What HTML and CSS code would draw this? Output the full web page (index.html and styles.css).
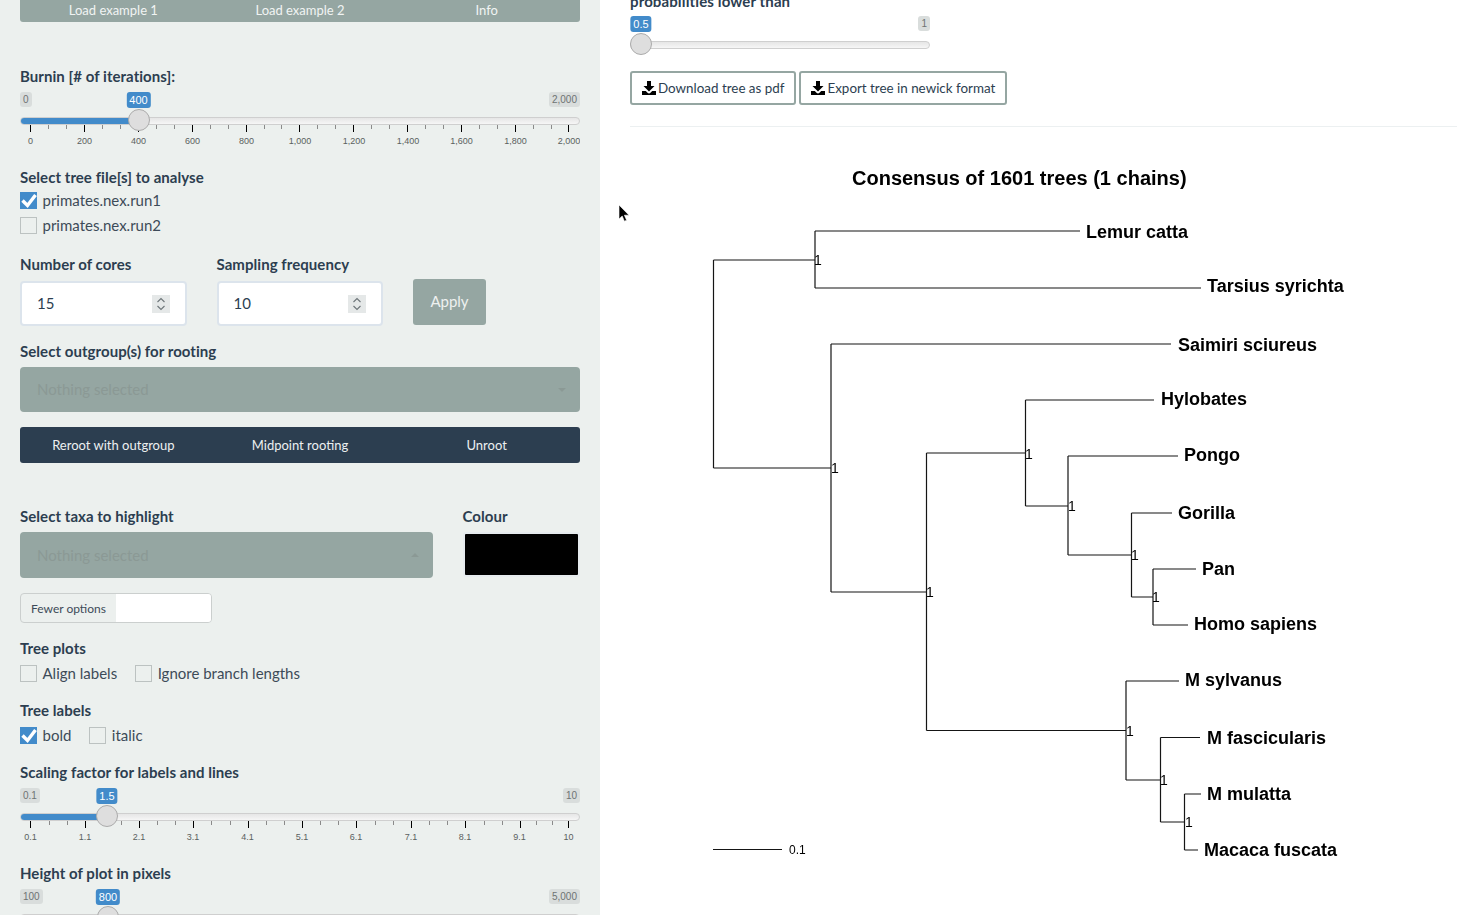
FILE: index.html
```html
<!DOCTYPE html>
<html lang="en">
<head>
  <meta charset="UTF-8">
  <title>Consensus tree</title>
  <link rel="stylesheet" href="styles.css">
</head>
<body>
  <div class="page">
    <div class="sidebar">
      <div class="btn-bar bar-grey">
        <span>Load example 1</span><span>Load example 2</span><span>Info</span>
      </div>

      <label class="field-label burnin-label">Burnin [# of iterations]:</label>
      <div class="slider">
        <div class="slider-ends"><span class="end">0</span><span class="end">2,000</span></div>
        <span class="value" style="left:118.5px">400</span>
        <div class="track"><div class="fill" style="width:119px"></div></div>
        <span class="handle" style="left:119px"></span>
        <svg class="grid" viewBox="20 0 560 22" width="560" height="22">
          <path class="major" d="M30.5 0v7M84.5 0v7M138.5 0v7M192.5 0v7M246.5 0v7M299.5 0v7M353.5 0v7M407.5 0v7M461.5 0v7M515.5 0v7M568.5 0v7"/>
          <path class="minor" d="M48.5 0v4M66.5 0v4M102.5 0v4M120.5 0v4M156.5 0v4M174.5 0v4M210.5 0v4M228.5 0v4M264.5 0v4M281.5 0v4M317.5 0v4M335.5 0v4M371.5 0v4M389.5 0v4M425.5 0v4M443.5 0v4M479.5 0v4M497.5 0v4M533.5 0v4M551.5 0v4"/>
          <text x="30.5" y="19">0</text><text x="84.5" y="19">200</text><text x="138.5" y="19">400</text><text x="192.5" y="19">600</text><text x="246.5" y="19">800</text><text x="300" y="19">1,000</text><text x="354" y="19">1,200</text><text x="408" y="19">1,400</text><text x="461.5" y="19">1,600</text><text x="515.5" y="19">1,800</text><text x="569" y="19">2,000</text>
        </svg>
      </div>

      <label class="field-label files-label">Select tree file[s] to analyse</label>
      <div class="check-row"><span class="check checked"><svg viewBox="0 0 17 17"><path d="M2.5 8.5l5 5L15.5 3" /></svg></span>primates.nex.run1</div>
      <div class="check-row"><span class="check"></span>primates.nex.run2</div>

      <div class="numbers">
        <div class="num-col">
          <label class="field-label">Number of cores</label>
          <div class="num-box">
            <input class="num-input" type="number" value="15">
            <span class="spin"><svg viewBox="0 0 18 18"><path d="M5.5 7L9 3.500 12.500 7M5.500 11L9 14.500 12.500 11"/></svg></span>
          </div>
        </div>
        <div class="num-col">
          <label class="field-label">Sampling frequency</label>
          <div class="num-box">
            <input class="num-input" type="number" value="10">
            <span class="spin"><svg viewBox="0 0 18 18"><path d="M5.5 7L9 3.500 12.500 7M5.500 11L9 14.500 12.500 11"/></svg></span>
          </div>
        </div>
        <button class="apply">Apply</button>
      </div>

      <label class="field-label outgroup-label">Select outgroup(s) for rooting</label>
      <div class="picker"><span>Nothing selected</span><span class="caret"></span></div>

      <div class="btn-bar bar-dark">
        <span>Reroot with outgroup</span><span>Midpoint rooting</span><span>Unroot</span>
      </div>

      <div class="taxa-row">
        <div class="taxa-col">
          <label class="field-label">Select taxa to highlight</label>
          <div class="picker picker-tall"><span>Nothing selected</span><span class="caret caret-up"></span></div>
        </div>
        <div class="colour-col">
          <label class="field-label">Colour</label>
          <div class="colour-box"></div>
        </div>
      </div>

      <div class="toggle"><span class="toggle-label">Fewer options</span><span class="toggle-empty"></span></div>

      <label class="field-label plots-label">Tree plots</label>
      <div class="check-line">
        <div class="check-row"><span class="check"></span>Align labels</div>
        <div class="check-row"><span class="check"></span>Ignore branch lengths</div>
      </div>

      <label class="field-label section-label">Tree labels</label>
      <div class="check-line">
        <div class="check-row"><span class="check checked"><svg viewBox="0 0 17 17"><path d="M2.5 8.5l5 5L15.5 3" /></svg></span>bold</div>
        <div class="check-row"><span class="check"></span>italic</div>
      </div>

      <label class="field-label section-label">Scaling factor for labels and lines</label>
      <div class="slider">
        <div class="slider-ends"><span class="end">0.1</span><span class="end">10</span></div>
        <span class="value" style="left:87px">1.5</span>
        <div class="track"><div class="fill" style="width:87px"></div></div>
        <span class="handle" style="left:87px"></span>
        <svg class="grid" viewBox="20 0 560 22" width="560" height="22">
          <path class="major" d="M30.5 0v7M85.5 0v7M139.5 0v7M193.5 0v7M248.5 0v7M302.5 0v7M356.5 0v7M411.5 0v7M465.5 0v7M520.5 0v7M568.5 0v7"/>
          <path class="minor" d="M49.5 0v4M67.5 0v4M103.5 0v4M121.5 0v4M157.5 0v4M175.5 0v4M211.5 0v4M230.5 0v4M266.5 0v4M284.5 0v4M320.5 0v4M338.5 0v4M375.5 0v4M393.5 0v4M429.5 0v4M447.5 0v4M484.5 0v4M502.5 0v4M536.5 0v4M552.5 0v4"/>
          <text x="30.5" y="19">0.1</text><text x="85" y="19">1.1</text><text x="139" y="19">2.1</text><text x="193" y="19">3.1</text><text x="247.5" y="19">4.1</text><text x="302" y="19">5.1</text><text x="356" y="19">6.1</text><text x="411" y="19">7.1</text><text x="465" y="19">8.1</text><text x="519.5" y="19">9.1</text><text x="568.5" y="19">10</text>
        </svg>
      </div>

      <label class="field-label height-label">Height of plot in pixels</label>
      <div class="slider">
        <div class="slider-ends"><span class="end">100</span><span class="end">5,000</span></div>
        <span class="value" style="left:88px">800</span>
        <div class="track"><div class="fill" style="width:88px"></div></div>
        <span class="handle" style="left:88px"></span>
      </div>
    </div>

    <div class="main">
      <label class="field-label prob-label">probabilities lower than</label>
      <div class="slider slider-short">
        <div class="slider-ends"><span class="end end-hidden">0.5</span><span class="end">1</span></div>
        <span class="value" style="left:11px">0.5</span>
        <div class="track"></div>
        <span class="handle" style="left:11px"></span>
      </div>

      <div class="downloads">
        <button class="dl-btn"><svg class="dl-icon" viewBox="0 0 14 14"><path d="M5 0h4v5h3.500L7 10.500 1.500 5H5zM0 10h3.800l1.700 1.700a2.100 2.100 0 0 0 3 0L10.200 10H14v4H0z"/></svg>Download tree as pdf</button>
        <button class="dl-btn"><svg class="dl-icon" viewBox="0 0 14 14"><path d="M5 0h4v5h3.500L7 10.500 1.500 5H5zM0 10h3.800l1.700 1.700a2.100 2.100 0 0 0 3 0L10.200 10H14v4H0z"/></svg>Export tree in newick format</button>
      </div>

      <hr class="rule">

      <!-- viewBox uses the page coordinates of the plot -->
      <svg class="tree" viewBox="630 127 827 788" width="827" height="788">
        <text class="tree-title" x="852" y="185">Consensus of 1601 trees (1 chains)</text>
        <path class="branches" d="M713.5 260V468M713.5 260H815M815 231V288M815 231H1080M815 288H1201M713.5 468H831M831 344V592M831 344H1171M831 592H926.5M926.5 453V730.5M926.5 453H1025.5M1025.5 400V506M1025.5 400H1154M1025.5 506H1068M1068 456V555M1068 456H1178M1068 555H1131.5M1131.5 513V597M1131.5 513H1172M1131.5 597H1153M1153 569V625M1153 569H1196M1153 625H1188M926.5 730.5H1126M1126 681V780M1126 681H1179M1126 780H1160.5M1160.5 737.5V822M1160.5 737.5H1200M1160.5 822H1184.5M1184.5 794V850M1184.5 794H1201M1184.5 850H1198M713 849.5H782"/>
        <g class="taxa">
          <text x="1086" y="238">Lemur catta</text>
          <text x="1207" y="292">Tarsius syrichta</text>
          <text x="1178" y="351">Saimiri sciureus</text>
          <text x="1161" y="405">Hylobates</text>
          <text x="1184" y="461">Pongo</text>
          <text x="1178" y="519">Gorilla</text>
          <text x="1202" y="575">Pan</text>
          <text x="1194" y="630">Homo sapiens</text>
          <text x="1185" y="686">M sylvanus</text>
          <text x="1207" y="744">M fascicularis</text>
          <text x="1207" y="800">M mulatta</text>
          <text x="1204" y="856">Macaca fuscata</text>
        </g>
        <g class="support">
          <text x="814" y="265">1</text>
          <text x="831" y="473">1</text>
          <text x="926" y="597">1</text>
          <text x="1025" y="459">1</text>
          <text x="1068" y="511">1</text>
          <text x="1131" y="560">1</text>
          <text x="1152" y="602">1</text>
          <text x="1126" y="736">1</text>
          <text x="1160" y="785">1</text>
          <text x="1185" y="827">1</text>
          <text class="scale-text" x="789" y="854">0.1</text>
        </g>
      </svg>
    </div>
  </div>

  <!-- mouse pointer captured in the shot -->
  <svg class="pointer" viewBox="0 0 12 18" width="12" height="18"><path d="M1 0v14l3.200-3 2.200 5.200 2.200-1-2.200-5H11z"/></svg>
</body>
</html>
```

FILE: styles.css
```css
body {
  margin: 0;
  font-family: Lato, "Open Sans", sans-serif;
  font-size: 15px;
  line-height: 21px;
  color: #2c3e50;
  background: #fff;
  overflow: hidden;
}
.page {
  display: flex;
  height: 915px;
  overflow: hidden;
}
.sidebar {
  flex: 0 0 600px;
  box-sizing: border-box;
  height: 915px;
  padding: 0 20px;
  background: #ecf0ee;
  overflow: hidden;
}
.main {
  flex: 1;
  min-width: 0;
  padding-left: 30px;
}

/* labels */
.field-label {
  display: block;
  font-weight: 700;
  letter-spacing: 0.05px;
  margin-bottom: 5px;
}
.burnin-label { margin-top: 44px; }
.files-label { margin-top: 20px; margin-bottom: 0; }
.outgroup-label { margin-top: 15px; }
.plots-label { margin-top: 15px; margin-bottom: 2px; }
.section-label { margin-top: 14px; margin-bottom: 2px; }
.section-label:nth-last-of-type(2) { margin-bottom: 5px; }
.height-label { margin-top: 20px; }
.prob-label { margin-top: -9px; margin-bottom: 4px; letter-spacing: 0.12px; }

/* button bars */
.btn-bar {
  display: flex;
  height: 36px;
  border-radius: 0 0 3px 3px;
  color: #fff;
  font-size: 13px;
}
.btn-bar span {
  flex: 1;
  display: flex;
  align-items: center;
  justify-content: center;
}
.bar-grey {
  height: 24px;
  margin-top: -2px;
  background: #95a6a2;
  color: #f1f4f3;
}
.bar-dark {
  margin-top: 15px;
  background: #2c3e50;
  border-radius: 3px;
  color: #ecf0f1;
}

/* sliders */
.slider {
  position: relative;
  font-family: "Liberation Sans", Arial, sans-serif;
}
.slider-short { width: 300px; }
.slider-ends {
  display: flex;
  justify-content: space-between;
  align-items: flex-start;
  height: 25px;
}
.end {
  padding: 1px 3px;
  font-size: 10px;
  line-height: 13px;
  color: #6e7373;
  background: #d9dddc;
  border-radius: 3px;
}
.end-hidden { visibility: hidden; }
.value {
  position: absolute;
  top: 0;
  padding: 1px 3px;
  transform: translateX(-50%);
  font-size: 11px;
  line-height: 14px;
  color: #fff;
  background: #428bca;
  border-radius: 3px;
}
.track {
  box-sizing: border-box;
  height: 8px;
  border: 1px solid #cfcfcf;
  border-radius: 4px;
  background: linear-gradient(#e6e6e6, #f6f6f6);
  overflow: hidden;
}
.fill {
  height: 8px;
  margin: -1px;
  background: #428bca;
}
.handle {
  position: absolute;
  top: 17px;
  box-sizing: border-box;
  width: 22px;
  height: 22px;
  margin-left: -11px;
  border: 1px solid #ababab;
  border-radius: 50%;
  background: #dedede;
}
.grid {
  display: block;
}
.major {
  stroke: #000;
  stroke-width: 1;
}
.minor {
  stroke: #8a8a8a;
  stroke-width: 1;
}
.grid text {
  font-size: 9px;
  fill: #5a5f60;
  text-anchor: middle;
}

/* checkboxes */
.check-row {
  display: flex;
  align-items: center;
  height: 25px;
  color: #3d4b58;
}
.check {
  box-sizing: border-box;
  width: 17px;
  height: 17px;
  margin-right: 5.5px;
  border: 1px solid #bcc2c1;
  background: #ecf0ee;
}
.check.checked {
  border: 0;
  background: #428bca;
}
.check svg {
  display: block;
}
.check path {
  fill: none;
  stroke: #fff;
  stroke-width: 3.4;
}
.check-line {
  display: flex;
  gap: 18px;
}

/* number inputs */
.numbers {
  display: flex;
  align-items: flex-start;
  margin-top: 16px;
}
.num-col {
  width: 166.5px;
  margin-right: 30px;
}
.num-col .field-label { margin-bottom: 6px; }
.num-box {
  display: flex;
  align-items: center;
  box-sizing: border-box;
  height: 45px;
  padding: 0 15px;
  border: 2px solid #dce4ec;
  border-radius: 4px;
  background: #fff;
}
.num-input {
  flex: 1;
  min-width: 0;
  padding: 0 0 2px;
  border: 0;
  outline: 0;
  font: 15px Lato, sans-serif;
  color: #2c3e50;
  background: transparent;
  -moz-appearance: textfield;
}
.num-input::-webkit-inner-spin-button {
  display: none;
}
.spin {
  width: 18px;
  height: 18px;
  background: #e5e8e8;
}
.spin svg {
  display: block;
}
.spin path {
  fill: none;
  stroke: #6d7579;
  stroke-width: 1.1;
}
.apply {
  width: 73px;
  height: 46px;
  margin-top: 25px;
  padding: 0 0 2px;
  border: 0;
  border-radius: 3px;
  font: 15px Lato, sans-serif;
  color: #eef1f0;
  background: #95a6a2;
}

/* select pickers */
.picker {
  display: flex;
  align-items: center;
  justify-content: space-between;
  box-sizing: border-box;
  height: 45px;
  padding: 0 14px 0 17px;
  border-radius: 4px;
  background: #95a6a2;
  color: #8b9995;
}
.picker-tall { height: 46px; }
.caret {
  width: 0;
  height: 0;
  border-left: 4px solid transparent;
  border-right: 4px solid transparent;
  border-top: 4px solid #8b9995;
}
.caret-up {
  border-top: 0;
  border-bottom: 4px solid #8b9995;
}
.taxa-row {
  display: flex;
  justify-content: space-between;
  margin-top: 43px;
}
.taxa-col { width: 413px; }
.colour-col { width: 117.5px; }
.colour-box {
  box-sizing: border-box;
  height: 45px;
  border: 2px solid #e6ebee;
  border-radius: 3px;
  background: #000;
}

/* options toggle */
.toggle {
  display: flex;
  box-sizing: border-box;
  width: 192px;
  height: 30px;
  margin-top: 15px;
  border: 1px solid #cbcfce;
  border-radius: 4px;
  overflow: hidden;
  font-size: 12px;
}
.toggle-label {
  display: flex;
  align-items: center;
  width: 95px;
  padding-left: 10px;
  box-sizing: border-box;
  color: #3d4b58;
}
.toggle-empty {
  flex: 1;
  background: #fff;
}

/* main column */
.downloads {
  display: flex;
  gap: 3px;
  margin-top: 22px;
}
.dl-btn {
  display: flex;
  align-items: center;
  box-sizing: border-box;
  height: 34px;
  padding: 0 10px 1px;
  border: 2px solid #95a6a2;
  border-radius: 3px;
  font: 13.4px Lato, sans-serif;
  color: #2c3e50;
  background: #fff;
}
.dl-icon {
  width: 14px;
  height: 14px;
  margin: 0 2px 0 0;
  fill: #000;
}
.rule {
  height: 1px;
  margin: 21px 0 0;
  border: 0;
  background: #ecf0f1;
}
.tree {
  display: block;
  will-change: transform;
  font-family: "Liberation Sans", Arial, sans-serif;
}
.tree-title {
  font-size: 20px;
  font-weight: 700;
}
.branches {
  fill: none;
  stroke: #151515;
  stroke-width: 1.2;
}
.taxa text {
  font-size: 18px;
  font-weight: 700;
}
.support text {
  font-size: 14px;
}
.support .scale-text {
  font-size: 12px;
}
.pointer {
  position: absolute;
  left: 618px;
  top: 205px;
  stroke: #fff;
  stroke-width: 0.6;
}
```
